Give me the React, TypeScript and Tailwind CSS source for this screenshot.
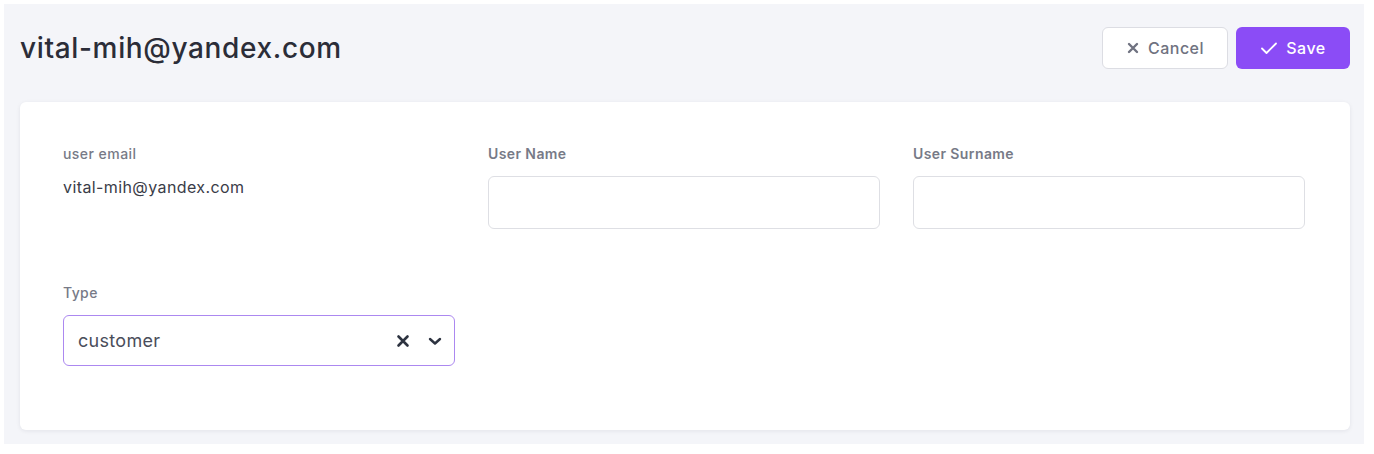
import React from 'react'

// EditUser: header with actions and a simple user form card
export default function App() {
  return (
    <div className="w-full h-[454px] bg-white" style={{ fontFamily: 'Inter, "Noto Sans", sans-serif' }}>
      <div className="ml-[4px] mt-[4px] w-[1360px] h-[440px] bg-[#f4f5f9] pl-4 pr-[14px] pt-[23px]">
        <div className="flex items-center justify-between h-[42px]">
          <h1 className="text-[28px] font-medium text-[#2b2d38] tracking-[0.65px]">vital-mih@yandex.com</h1>
          <div className="flex gap-2">
            <button className="h-[42px] w-[126px] flex items-center justify-center gap-2 bg-white border border-[#dcdde3] rounded-md text-[#6f7280] text-[16px] font-medium tracking-[0.5px]">
              <svg width="14" height="14" viewBox="0 0 14 14" fill="none">
                <path d="M3 3l8 8M11 3l-8 8" stroke="#6f7280" strokeWidth="2.4" strokeLinecap="round" />
              </svg>
              Cancel
            </button>
            <button className="h-[42px] w-[114px] flex items-center justify-center gap-2 bg-[#8b4cf6] rounded-md text-white text-[16px] font-medium tracking-[0.5px]">
              <svg width="18" height="14" viewBox="0 0 18 14" fill="none">
                <path d="M2 7.5l4.5 4.5L16 2.5" stroke="white" strokeWidth="1.8" strokeLinecap="round" strokeLinejoin="round" />
              </svg>
              Save
            </button>
          </div>
        </div>

        <div className="mt-[33px] bg-white rounded-md shadow-[0_1px_4px_rgba(20,20,50,0.08)] h-[328px] pl-[43px] pr-[45px] pt-[44px]">
          <div className="grid grid-cols-[392px_392px_392px] gap-x-[33px]">
            <div>
              <div className="text-[14px] text-[#777a87] font-medium leading-4 tracking-[0.45px]">user email</div>
              <div className="mt-[13px] text-[16px] text-[#3a3c48] tracking-[0.4px]">vital-mih@yandex.com</div>
            </div>
            <div>
              <div className="text-[14px] text-[#777a87] font-semibold leading-4 tracking-[0.4px]">User Name</div>
              <input className="mt-[14px] w-full h-[53px] border border-[#dedfe4] rounded-md outline-none px-3" />
            </div>
            <div>
              <div className="text-[14px] text-[#777a87] font-semibold leading-4 tracking-[0.4px]">User Surname</div>
              <input className="mt-[14px] w-full h-[53px] border border-[#dedfe4] rounded-md outline-none px-3" />
            </div>
          </div>

          <div className="mt-[56px] w-[392px]">
            <div className="text-[14px] text-[#777a87] font-medium leading-4 tracking-[0.4px]">Type</div>
            <div className="mt-[14px] h-[51px] border border-[#ac88f0] rounded-md flex items-center pl-[14px] pr-[12px]">
              <span className="flex-1 text-[18px] text-[#4a4d5a] tracking-[0.3px]">customer</span>
              <svg width="14" height="14" viewBox="0 0 14 14" fill="none" className="mr-[18px]">
                <path d="M2.5 2.5l9 9M11.5 2.5l-9 9" stroke="#2d3340" strokeWidth="2.6" strokeLinecap="round" />
              </svg>
              <svg width="14" height="10" viewBox="0 0 14 10" fill="none">
                <path d="M2 3l5 4.5L12 3" stroke="#2d3340" strokeWidth="2.4" strokeLinecap="round" strokeLinejoin="round" />
              </svg>
            </div>
          </div>
        </div>
      </div>
    </div>
  )
}
